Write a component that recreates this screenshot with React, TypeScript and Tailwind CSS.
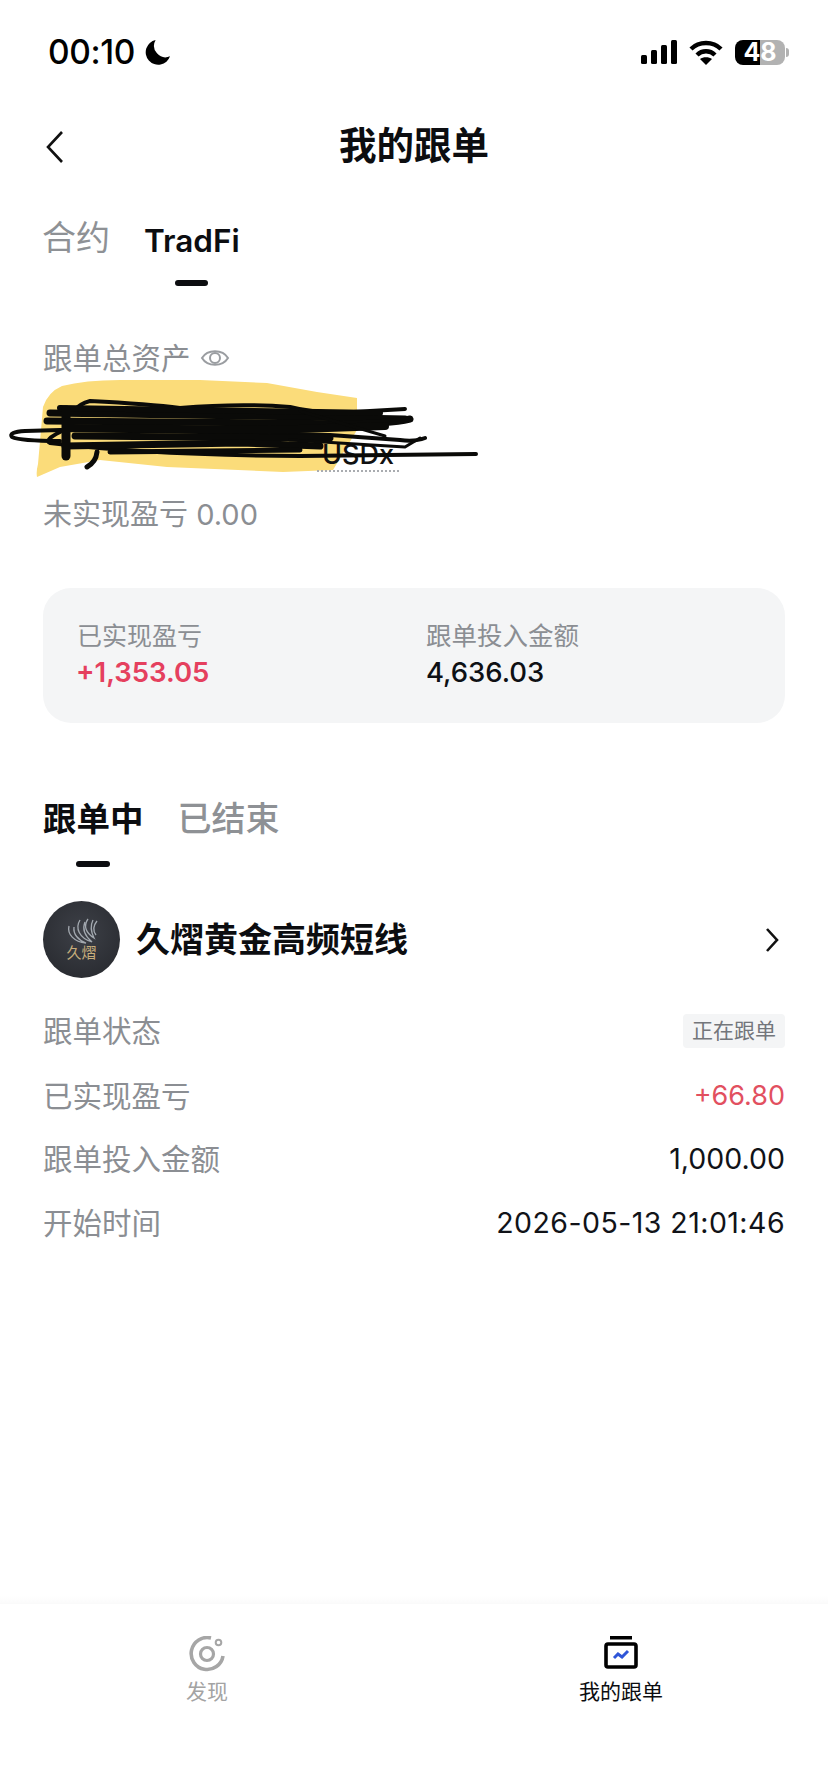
import React from 'react'

const rows = [
  { label: '已实现盈亏', value: '+66.80', className: 'mt-[28px]', valueClassName: 'text-[27px] text-[#e2505f]' },
  { label: '跟单投入金额', value: '1,000.00', className: 'mt-[27px]', valueClassName: 'text-[28.5px] text-[#111318]' },
  { label: '开始时间', value: '2026-05-13 21:01:46', className: 'mt-[28px]', valueClassName: 'text-[28.5px] tracking-[0.45px] text-[#111318]' },
]

function StatusBar() {
  return (
    <div className="flex h-[104px] items-center justify-between pl-[48px] pr-[39px]">
      <div className="flex items-center gap-[10px]">
        <span className="text-[33.5px] leading-[40px] font-medium tracking-[-0.4px] text-black">00:10</span>
        <svg width="26" height="26" viewBox="0 0 27 27">
          <path d="M11 1 A13 13 0 1 0 26 18 A12 12 0 0 1 11 1 Z" fill="#000" />
        </svg>
      </div>
      <div className="flex items-center gap-[12px]">
        <svg width="36" height="24" viewBox="0 0 36 24" fill="#000">
          <rect x="0" y="15" width="6" height="9" rx="1.5" />
          <rect x="10" y="10" width="6" height="14" rx="1.5" />
          <rect x="20" y="5" width="6" height="19" rx="1.5" />
          <rect x="30" y="0" width="6" height="24" rx="1.5" />
        </svg>
        <svg width="34" height="25" viewBox="0 0 34 25" fill="none" stroke="#000" strokeWidth="4.4">
          <path d="M2 9 C10 1 24 1 32 9" />
          <path d="M8 15 C13 10 21 10 26 15" />
          <path d="M17 25 L11 19 C14 16.5 20 16.5 23 19 Z" fill="#000" stroke="none" />
        </svg>
        <div className="flex items-center gap-[1px]">
          <div className="flex h-[25px] w-[50px] items-center justify-center rounded-[8px] bg-[linear-gradient(90deg,#000_49%,#b2b2b2_49%)] text-[25px] leading-none font-bold text-white">
            48
          </div>
          <div className="h-[9px] w-[3px] rounded-r-full bg-[#b2b2b2]" />
        </div>
      </div>
    </div>
  )
}

function NavBar() {
  return (
    <div className="relative flex h-[82px] items-center justify-center">
      <svg className="absolute top-[26px] left-[44px]" width="22" height="34" viewBox="0 0 22 34" fill="none" stroke="#111" strokeWidth="2.6">
        <path d="M18 2 L4 17 L18 32" />
      </svg>
      <h1 className="pt-[2px] text-[37.5px] leading-[44px] font-semibold text-[#0c0d10]">我的跟单</h1>
    </div>
  )
}

function YellowMark() {
  return (
    <svg className="absolute top-0 left-0" width="500" height="120" viewBox="0 376 500 120" fill="none">
      <path
        d="M37 477 Q36 472 38 464 L43 407 Q48 392 62 386 Q85 380 120 380 L200 380 L267 383 L317 392 L357 398 L357 430 L333 470 L283 472 L167 467 L100 460 L60 467 Z"
        fill="#fbdc7a"
      />
    </svg>
  )
}

function BlackScribble() {
  return (
    <svg className="absolute top-0 left-0" width="500" height="120" viewBox="0 376 500 120" fill="none">
      <g stroke="#0a0a08" strokeLinecap="round" strokeLinejoin="round" strokeWidth="4">
        <path d="M70 414 Q80 403 90 401 Q150 404 180 408 Q240 403 290 407 Q320 415 370 411 L405 409" />
        <path d="M50 413 L250 416 L405 419" strokeWidth="7" />
        <path d="M60 408 L380 413" strokeWidth="6" />
        <path d="M47 421 L300 423 Q380 426 410 419" strokeWidth="7" />
        <path d="M60 441 Q20 441 12 437 Q8 432 25 431 L60 430 L200 432 L330 435 L400 440 Q415 442 425 438" />
        <path d="M60 432 Q44 440 50 443 Q150 455 300 456 L476 454" />
        <path d="M70 428 L270 430 L385 426" strokeWidth="8" />
        <path d="M75 436 L330 438" strokeWidth="7" />
        <path d="M65 446 L240 443 L320 446" strokeWidth="7" />
        <path d="M110 452 L300 450" strokeWidth="5" />
        <path d="M290 440 L405 447 L420 438" strokeWidth="3" />
        <path d="M300 411 L385 436" strokeWidth="3" />
        <path d="M66 410 L66 456" strokeWidth="9" />
        <path d="M97 452 Q96 462 87 467" strokeWidth="5" />
      </g>
    </svg>
  )
}

function AssetSummary() {
  return (
    <div className="mt-[54px] px-[43px]">
      <div className="flex h-[36px] items-center gap-[9px] text-[29.5px] leading-[36px] text-[#8b8e93]">
        跟单总资产
        <svg width="30" height="24" viewBox="0 0 29 24" fill="none" stroke="#9a9da1" strokeWidth="2">
          <path d="M1.5 12 C7 3 22 3 27.5 12 C22 21 7 21 1.5 12 Z" />
          <circle cx="14.5" cy="12" r="5" />
        </svg>
      </div>
      <div className="relative -mx-[43px] h-[120px]">
        <YellowMark />
        <div className="absolute top-[66px] left-[317px] border-b-2 border-dotted border-[#a9acb0] px-[5px] pb-[3px] text-[27px] leading-[25px] font-medium text-[#111]">
          USDx
        </div>
        <BlackScribble />
      </div>
      <div className="mt-[1px] text-[29px] leading-[36px] text-[#8b8e93]">未实现盈亏 0.00</div>
    </div>
  )
}

function StatsCard() {
  return (
    <div className="mx-[43px] mt-[55px] flex h-[135px] rounded-[28px] bg-[#f4f5f6] pt-[30px] pl-[34px]">
      <div className="w-[349px]">
        <div className="text-[25px] leading-[36px] text-[#8b8e93]">已实现盈亏</div>
        <div className="-ml-[1px] text-[27.5px] leading-[36px] font-semibold text-[#e5405e]">+1,353.05</div>
      </div>
      <div>
        <div className="text-[25.5px] leading-[36px] text-[#8b8e93]">跟单投入金额</div>
        <div className="text-[27.5px] leading-[36px] font-medium text-[#0e1014]">4,636.03</div>
      </div>
    </div>
  )
}

function TraderLogo() {
  return (
    <div className="flex h-[77px] w-[77px] shrink-0 flex-col items-center justify-center rounded-full bg-[radial-gradient(circle_at_50%_40%,#3d4047,#25272c)]">
      <svg width="32" height="26" viewBox="0 0 32 26" fill="none" stroke="#a3a9b0" strokeWidth="1.3">
        <path d="M3 8 C1 16 8 24 20 25 C12 22 7 16 8 9" />
        <path d="M14 2 C9 10 13 20 26 24 C19 18 16 11 19 4" />
        <path d="M22 1 C17 8 20 15 28 20 C25 14 24 8 27 2" />
        <path d="M31 3 C27 8 27 13 30 17" />
      </svg>
      <span className="mt-[1px] text-[15px] leading-[16px] text-[#c7ae7c]">久熠</span>
    </div>
  )
}

function FollowList() {
  return (
    <div className="px-[43px]">
      <div className="mt-[76px] flex gap-[34px]">
        <div className="flex flex-col items-center">
          <span className="text-[33.5px] leading-[40px] font-bold text-[#0c0d10]">跟单中</span>
          <span className="mt-[22px] h-[6px] w-[34px] rounded-full bg-[#0c0d10]" />
        </div>
        <span className="text-[34px] leading-[40px] font-medium text-[#8e9195]">已结束</span>
      </div>

      <div className="mt-[34px] flex items-center">
        <TraderLogo />
        <span className="ml-[16px] text-[34px] leading-[46px] font-bold text-[#0c0d10]">久熠黄金高频短线</span>
        <svg className="mr-[6px] ml-auto" width="14" height="26" viewBox="0 0 14 26" fill="none" stroke="#111" strokeWidth="2.6">
          <path d="M2 2 L12 13 L2 24" />
        </svg>
      </div>

      <div className="mt-[34px] flex flex-col">
        <div className="flex h-[38px] items-center justify-between">
          <span className="text-[29.5px] leading-[36px] text-[#8b8e93]">跟单状态</span>
          <span className="rounded-[4px] bg-[#f4f5f6] px-[9px] text-[21px] leading-[34px] text-[#73767b]">正在跟单</span>
        </div>
        {rows.map(row => (
          <div key={row.label} className={`flex items-center justify-between ${row.className}`}>
            <span className="text-[29.5px] leading-[36px] text-[#8b8e93]">{row.label}</span>
            <span className={`leading-[36px] ${row.valueClassName}`}>{row.value}</span>
          </div>
        ))}
      </div>
    </div>
  )
}

function BottomNav() {
  return (
    <div className="mt-auto h-[194px]">
      <div className="h-[8px] bg-gradient-to-b from-white to-[#fafafa]" />
      <div className="grid grid-cols-2 pt-[32px]">
        <div className="flex flex-col items-center">
          <svg width="36" height="36" viewBox="0 0 36 36" fill="none" stroke="#a6a6a6">
            <path d="M22 2 A16 16 0 1 0 34 20" strokeWidth="3.6" />
            <circle cx="18" cy="18" r="6.5" strokeWidth="3.2" />
            <circle cx="29.5" cy="6.5" r="2.8" strokeWidth="2" />
          </svg>
          <span className="mt-[7px] text-[21px] leading-[26px] text-[#a3a3a3]">发现</span>
        </div>
        <div className="flex flex-col items-center">
          <svg width="34" height="33" viewBox="0 0 34 33" fill="none">
            <rect x="6" y="0" width="22" height="3.5" fill="#000" />
            <rect x="2" y="8" width="30" height="23" rx="2" stroke="#000" strokeWidth="3.6" />
            <path d="M10 22 L14 18 L18 21 L24 15" stroke="#2f56d8" strokeWidth="3" />
          </svg>
          <span className="mt-[10px] text-[21px] leading-[26px] text-[#0c0d10]">我的跟单</span>
        </div>
      </div>
    </div>
  )
}

export default function App() {
  return (
    <div className="flex h-[1790px] w-[828px] flex-col overflow-hidden bg-white [font-family:Inter,'Noto_Sans_CJK_SC',sans-serif]">
      <StatusBar />
      <NavBar />
      <div className="mt-[34px] flex gap-[34px] px-[43px]">
        <span className="-ml-[1px] text-[34px] leading-[36px] text-[#8e9195]">合约</span>
        <div className="flex flex-col items-center pt-[3px]">
          <span className="text-[31.5px] leading-[36px] font-semibold text-[#0c0d10]">TradFi</span>
          <span className="mt-[21px] h-[6px] w-[33px] rounded-full bg-[#0c0d10]" />
        </div>
      </div>
      <AssetSummary />
      <StatsCard />
      <FollowList />
      <BottomNav />
    </div>
  )
}
